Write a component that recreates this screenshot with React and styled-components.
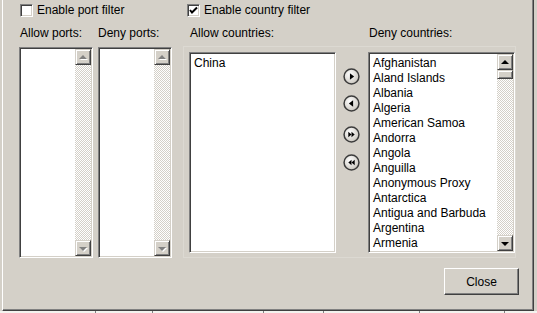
import React from "react";
import styled, { createGlobalStyle } from "styled-components";

const GlobalStyle = createGlobalStyle`
  html, body {
    margin: 0;
    padding: 0;
    background: #d4d0c8;
    overflow: hidden;
  }
  body {
    font-family: "Liberation Sans", Arial, sans-serif;
    font-size: 12px;
    color: #000;
  }
`;

const COUNTRIES = [
  "Afghanistan",
  "Aland Islands",
  "Albania",
  "Algeria",
  "American Samoa",
  "Andorra",
  "Angola",
  "Anguilla",
  "Anonymous Proxy",
  "Antarctica",
  "Antigua and Barbuda",
  "Argentina",
  "Armenia",
];

const STRIP_STOPS = [95, 152, 263, 323, 419, 504];

const Screen = styled.div`
  width: 537px;
  height: 313px;
  padding-left: 2px;
  box-sizing: border-box;
  display: flex;
  flex-direction: column;
`;

const Dialog = styled.div`
  width: 532px;
  height: 311px;
  box-sizing: border-box;
  flex: none;
  background: #d4d0c8;
  border-left: 1px solid #fff;
  border-right: 1px solid #404040;
  border-bottom: 1px solid #404040;
  box-shadow: inset -1px 0 0 #808080, inset 0 -1px 0 #808080;
  display: flex;
  flex-direction: column;
`;

const TopRow = styled.div`
  display: flex;
  height: 14px;
  margin-top: 3px;
  padding-left: 17px;
`;

const CheckLabel = styled.label`
  display: flex;
  align-items: center;
  gap: 4px;
  width: ${(p) => p.$width || "auto"};
  line-height: 14px;
  white-space: nowrap;
`;

const Box = styled.span`
  width: 13px;
  height: 13px;
  box-sizing: border-box;
  flex: none;
  background: #fff;
  border-top: 1px solid #808080;
  border-left: 1px solid #808080;
  border-right: 1px solid #fff;
  border-bottom: 1px solid #fff;
  box-shadow: inset 1px 1px 0 #404040, inset -1px -1px 0 #d4d0c8;
  display: flex;
  align-items: center;
  justify-content: center;
`;

const Body = styled.div`
  display: flex;
  margin-top: 9px;
`;

const PortSection = styled.div`
  display: flex;
  gap: 5px;
  margin-left: 16px;
`;

const PortColumn = styled.div`
  display: flex;
  flex-direction: column;
  width: 74px;
`;

const Label = styled.div`
  height: 14px;
  line-height: 14px;
  white-space: nowrap;
  width: ${(p) => (p.$width ? `${p.$width}px` : "auto")};
  margin-left: ${(p) => p.$indent || 0}px;
`;

const CountrySection = styled.div`
  display: flex;
  flex-direction: column;
  margin-left: 11px;
`;

const CountryLabels = styled.div`
  display: flex;
  padding-left: 7px;
`;

const ListFrame = styled.div`
  display: flex;
  margin-top: 6px;
  width: 333px;
  height: 212px;
  box-sizing: border-box;
  border: 1px solid #dcd9d2;
  padding: 5px 0 0 5px;
`;

const ListBox = styled.div`
  display: flex;
  width: ${(p) => p.$width}px;
  height: ${(p) => p.$height}px;
  box-sizing: border-box;
  margin-top: ${(p) => p.$top || 0}px;
  background: #fff;
  border-top: 1px solid #808080;
  border-left: 1px solid #808080;
  border-right: 1px solid #fff;
  border-bottom: 1px solid #fff;
  box-shadow: inset 1px 1px 0 #404040, inset -1px -1px 0 #d4d0c8;
  padding: 1px;
`;

const Items = styled.ul`
  flex: 1;
  margin: 0;
  padding: 2px 0 0 3px;
  list-style: none;
  overflow: hidden;
  li {
    height: 15px;
    line-height: 15px;
    white-space: nowrap;
  }
`;

const ScrollBar = styled.div`
  width: 16px;
  flex: none;
  display: flex;
  flex-direction: column;
  background-color: #fff;
  background-image: repeating-conic-gradient(#d4d0c8 0 25%, #fff 0 50%);
  background-size: 2px 2px;
`;

const Raised = styled.div`
  box-sizing: border-box;
  background: #d4d0c8;
  border-top: 1px solid #d4d0c8;
  border-left: 1px solid #d4d0c8;
  border-right: 1px solid #404040;
  border-bottom: 1px solid #404040;
  box-shadow: inset 1px 1px 0 #fff, inset -1px -1px 0 #808080;
`;

const ScrollButton = styled(Raised)`
  width: 16px;
  height: 16px;
  display: flex;
  align-items: center;
  justify-content: center;
`;

const Thumb = styled(Raised)`
  width: 16px;
  height: 9px;
`;

const Track = styled.div`
  flex: 1;
`;

const Arrow = styled.span`
  width: 0;
  height: 0;
  border-left: 4px solid transparent;
  border-right: 4px solid transparent;
  ${(p) =>
    p.$down
      ? `border-top: 4px solid ${p.$disabled ? "#808080" : "#000"};`
      : `border-bottom: 4px solid ${p.$disabled ? "#808080" : "#000"};`}
  ${(p) => (p.$disabled ? "filter: drop-shadow(1px 1px 0 #fff);" : "")}
  margin-top: ${(p) => (p.$down ? "1px" : "-1px")};
`;

const MoveColumn = styled.div`
  width: 32px;
  flex: none;
  display: flex;
  flex-direction: column;
  padding-left: 7px;
  box-sizing: border-box;
`;

const MoveButton = styled.button`
  width: 17px;
  height: 17px;
  padding: 0;
  border: none;
  background: none;
  margin-top: ${(p) => p.$gap}px;
  display: block;
  cursor: pointer;
`;

const Footer = styled.div`
  display: flex;
  justify-content: flex-end;
  padding-right: 14px;
  margin-top: 10px;
`;

const CloseButton = styled(Raised)`
  width: 75px;
  height: 27px;
  border-top-color: #fff;
  border-left-color: #fff;
  box-shadow: inset -1px -1px 0 #808080;
  display: flex;
  align-items: center;
  justify-content: center;
  line-height: 14px;
  cursor: default;
`;

const Strip = styled.div`
  position: relative;
  height: 2px;
  margin-left: -2px;
  width: 537px;
  background: #f4f3ef;
`;

const StripStop = styled.span`
  position: absolute;
  top: 0;
  width: 1px;
  height: 2px;
  background: #808080;
`;

function Scroll({ disabled, thumb }) {
  return (
    <ScrollBar>
      <ScrollButton>
        <Arrow $disabled={disabled} />
      </ScrollButton>
      {thumb && <Thumb />}
      <Track />
      <ScrollButton>
        <Arrow $down $disabled={disabled} />
      </ScrollButton>
    </ScrollBar>
  );
}

function Circle({ children }) {
  return (
    <svg width="17" height="17" viewBox="0 0 16 16">
      <defs>
        <radialGradient id="cg" cx="40%" cy="35%" r="70%">
          <stop offset="0%" stopColor="#ffffff" />
          <stop offset="100%" stopColor="#c9c5bd" />
        </radialGradient>
      </defs>
      <circle cx="8" cy="8" r="7" fill="url(#cg)" stroke="#3c3c3c" strokeWidth="1.4" />
      {children}
    </svg>
  );
}

const MOVES = [
  { gap: 16, shape: <polygon points="6.5,5 6.5,11 10.5,8" fill="#000" /> },
  { gap: 10, shape: <polygon points="9.5,5 9.5,11 5.5,8" fill="#000" /> },
  {
    gap: 14,
    shape: (
      <>
        <polygon points="5,5.5 5,10.5 8,8" fill="#000" />
        <polygon points="8,5.5 8,10.5 11,8" fill="#000" />
      </>
    ),
  },
  {
    gap: 11,
    shape: (
      <>
        <polygon points="8,5.5 8,10.5 5,8" fill="#000" />
        <polygon points="11,5.5 11,10.5 8,8" fill="#000" />
      </>
    ),
  },
];

export default function App() {
  return (
    <Screen>
      <GlobalStyle />
      <Dialog>
        <TopRow>
          <CheckLabel $width="167px">
            <Box />
            Enable port filter
          </CheckLabel>
          <CheckLabel>
            <Box>
              <svg width="9" height="9" viewBox="0 0 9 9">
                <polyline points="1,4 3,6.5 8,1.5" fill="none" stroke="#000" strokeWidth="2" />
              </svg>
            </Box>
            Enable country filter
          </CheckLabel>
        </TopRow>

        <Body>
          <PortSection>
            <PortColumn>
              <Label $indent={1}>Allow ports:</Label>
              <ListBox $width={74} $height={211} $top={7}>
                <Items />
                <Scroll disabled />
              </ListBox>
            </PortColumn>
            <PortColumn>
              <Label>Deny ports:</Label>
              <ListBox $width={74} $height={211} $top={7}>
                <Items />
                <Scroll disabled />
              </ListBox>
            </PortColumn>
          </PortSection>

          <CountrySection>
            <CountryLabels>
              <Label $width={179}>Allow countries:</Label>
              <Label>Deny countries:</Label>
            </CountryLabels>
            <ListFrame>
              <ListBox $width={147} $height={201}>
                <Items>
                  <li>China</li>
                </Items>
              </ListBox>
              <MoveColumn>
                {MOVES.map((m, i) => (
                  <MoveButton key={i} $gap={m.gap}>
                    <Circle>{m.shape}</Circle>
                  </MoveButton>
                ))}
              </MoveColumn>
              <ListBox $width={147} $height={201}>
                <Items>
                  {COUNTRIES.map((c) => (
                    <li key={c}>{c}</li>
                  ))}
                </Items>
                <Scroll thumb />
              </ListBox>
            </ListFrame>
          </CountrySection>
        </Body>

        <Footer>
          <CloseButton>Close</CloseButton>
        </Footer>
      </Dialog>
      <Strip>
        {STRIP_STOPS.map((x) => (
          <StripStop key={x} style={{ left: x }} />
        ))}
      </Strip>
    </Screen>
  );
}
